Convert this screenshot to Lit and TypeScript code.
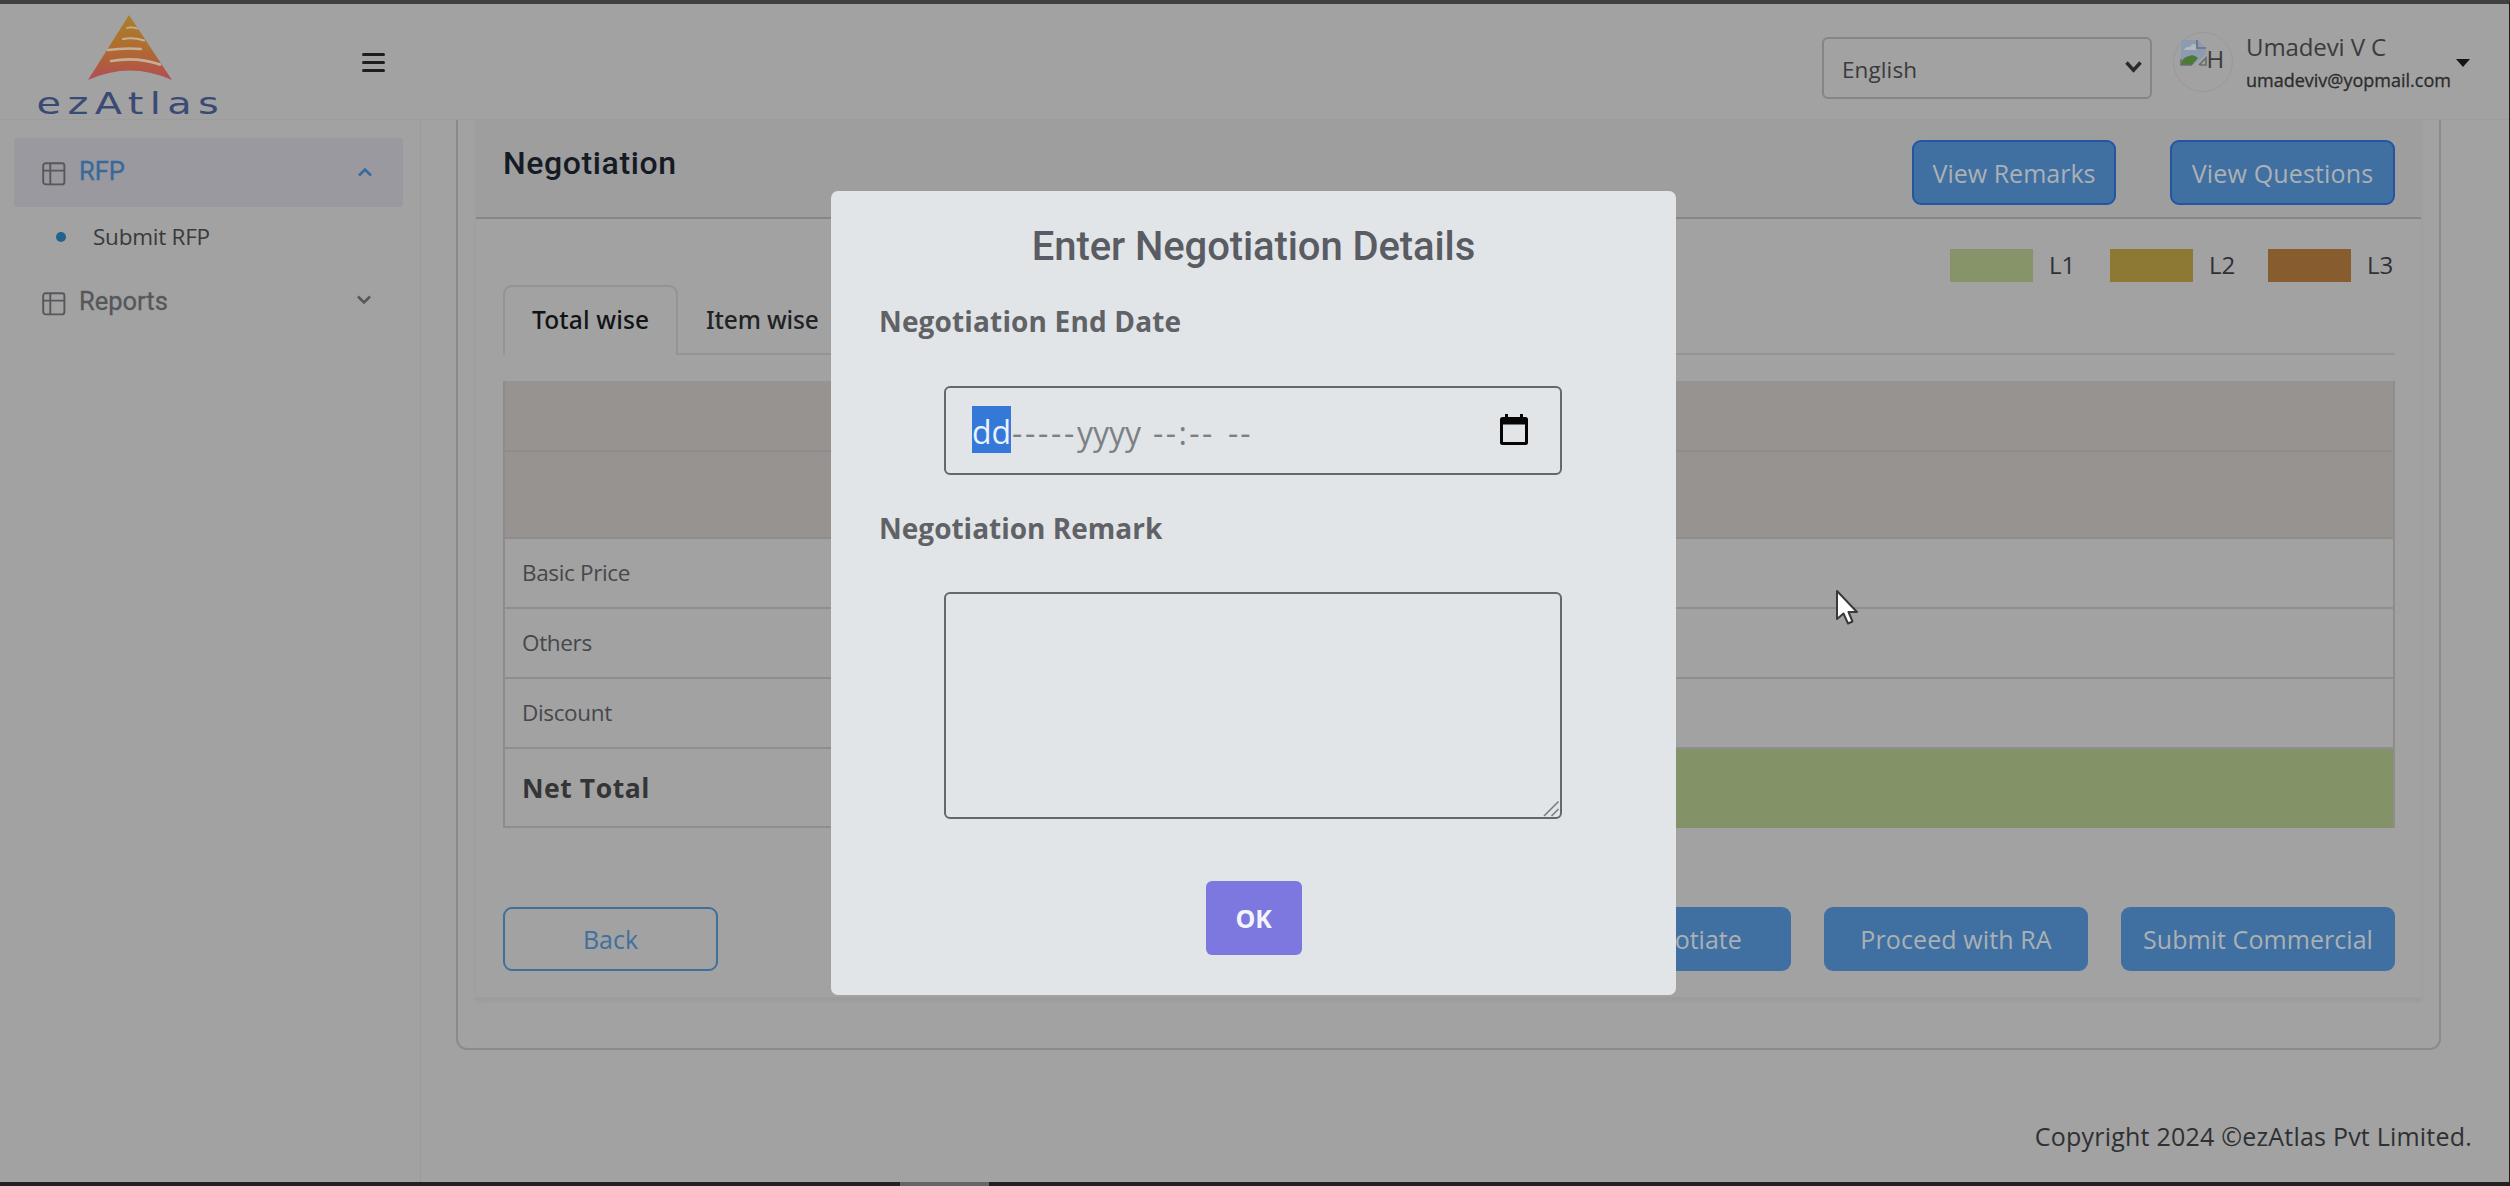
import { LitElement, html, svg, css } from "lit";
import { customElement, property } from "lit/decorators.js";

const gridIcon = svg`<svg class="grid-icon" viewBox="0 0 24 24" width="24" height="24">
  <rect x="1.2" y="1.2" width="21.2" height="21.2" rx="2.4" />
  <path d="M1.2 8.6H22.4M8.3 1.2V22.4" />
</svg>`;

@customElement("ez-logo")
class EzLogo extends LitElement {
  static styles = css`
    :host { display: block; width: 200px; height: 111px; }
    svg { overflow: visible; }
    .word { font-family: "DejaVu Sans", sans-serif; font-size: 31px; letter-spacing: 5px; fill: #3a4a74; }
    .band { fill: none; stroke: #c4b09a; stroke-linecap: round; }
  `;
  render() {
    return html`<svg viewBox="30 8 200 111" width="200" height="111">
      <defs>
        <linearGradient id="g" x1="0" y1="0" x2="0" y2="1">
          <stop offset="0" stop-color="#ab7d2c" />
          <stop offset="0.5" stop-color="#b06d2e" />
          <stop offset="0.75" stop-color="#b25c3e" />
          <stop offset="1" stop-color="#b04d5b" />
        </linearGradient>
      </defs>
      <path fill="url(#g)" d="M129 15L172 80Q130 61 88 80Z" />
      <path class="band" stroke-width="1.8" d="M127 28Q132 26.500 137 28.500" />
      <path class="band" stroke-width="2.2" d="M123 39Q133 37 144 40.500" />
      <path class="band" stroke-width="2.4" d="M108 50Q125 47.500 141 49" />
      <path class="band" stroke-width="2.6" d="M111 61Q136 56.500 160 64.500" />
      <text class="word" transform="translate(36.500 114.300) scale(1.285 1)">ezAtlas</text>
    </svg>`;
  }
}

@customElement("ez-button")
class EzButton extends LitElement {
  @property() label = "";
  static styles = css`
    :host {
      display: flex; align-items: center; justify-content: center; box-sizing: border-box;
      border-radius: 9px; background: #4070a1; color: #abb0b4;
      font: 400 25px/36px "Open Sans", "Noto Sans", sans-serif; white-space: nowrap;
    }
  `;
  render() {
    return html`${this.label}`;
  }
}

@customElement("ez-header")
class EzHeader extends LitElement {
  static styles = css`
    :host {
      display: flex; align-items: flex-start; height: 116px; box-sizing: border-box;
      background: #a2a2a2; border-bottom: 1px solid #9d9d9d; color: #3b3b3b;
      font-family: "Open Sans", "Noto Sans", sans-serif; white-space: nowrap;
    }
    ez-logo { margin: 4px 0 0 30px; }
    .burger { display: flex; flex-direction: column; gap: 4.500px; width: 23px; margin: 49px 0 0 131.500px; }
    .burger i { height: 3.400px; border-radius: 1.500px; background: #1d1d1d; }
    .lang {
      display: flex; align-items: center; justify-content: space-between; box-sizing: border-box;
      width: 330px; height: 62px; margin: 33px 0 0 auto; padding: 3px 8px 0 18px;
      border: 2px solid #858585; border-radius: 6px; font-size: 22.500px; letter-spacing: 0.100px;
    }
    .lang svg { margin-top: -5px; }
    .avatar {
      display: flex; box-sizing: border-box; width: 60px; height: 60px; margin: 28px 12px 0 21px;
      padding: 5px 0 0 5.500px; border: 1.500px solid #999; border-radius: 50%; font-size: 24px; line-height: 36px;
    }
    .avatar span { margin: 3px 0 0 -1px; }
    .avatar svg { margin-top: 1px; }
    .who { display: flex; flex-direction: column; gap: 3px; width: 210px; padding: 27px 0 0 1px; }
    .name { font-size: 24px; line-height: 32px; letter-spacing: -0.100px; }
    .mail { font-size: 18px; line-height: 28px; color: #2c2c2c; -webkit-text-stroke: 0.300px currentColor; }
    .caret { margin: 55px 39px 0 0; border: 7px solid transparent; border-top: 8px solid #161616; border-bottom: 0; }
  `;
  render() {
    return html`
      <ez-logo></ez-logo>
      <div class="burger"><i></i><i></i><i></i></div>
      <div class="lang"><span>English</span>
        <svg width="17" height="12" viewBox="0 0 17 12" fill="none" stroke="#2a2a2a" stroke-width="3.400"><path d="M1.500 1.500L8.500 9.200L15.500 1.500" /></svg>
      </div>
      <div class="avatar">
        <svg width="28" height="28" viewBox="0 0 28 28">
          <path d="M1 1H18L26 9V15L13 26H1Z" fill="#8d9bb0" />
          <path d="M4 11Q6 7 10 8Q12 3 16 6V11Z" fill="#b3b8bd" />
          <path d="M1 26Q2 18 9 17Q14 15 18 19L12 26Z" fill="#4a7a35" />
          <path d="M17 1V9H26" fill="none" stroke="#69717c" stroke-width="1.600" />
          <path d="M1 20V26H12M20 26H26V19L19 26" fill="none" stroke="#68706c" stroke-width="1.600" />
        </svg><span>H</span>
      </div>
      <div class="who"><span class="name">Umadevi V C</span><span class="mail">umadeviv@yopmail.com</span></div>
      <i class="caret"></i>
    `;
  }
}

@customElement("ez-sidebar")
class EzSidebar extends LitElement {
  static styles = css`
    :host {
      display: flex; flex-direction: column; box-sizing: border-box; width: 421px; padding: 18px 17px 0 14px;
      border-right: 1.500px solid #9a9a9a; white-space: nowrap;
    }
    .item {
      display: flex; align-items: center; box-sizing: border-box; height: 69px; padding: 0 31px 0 27.500px;
      color: #55575b; font: 400 25.500px/34px Roboto, "Open Sans", sans-serif;
    }
    .item span { margin: -3px auto 0 13.500px; -webkit-text-stroke: 0.300px currentColor; }
    .item.active { background: #99999f; color: #38699b; border-radius: 3px; }
    .item.closed { padding-top: 3px; }
    .item.closed .chev { margin: -4px 1px 0 0; }
    .grid-icon { fill: none; stroke: #56585b; stroke-width: 1.900; margin-top: 3px; }
    .chev { fill: none; stroke: currentColor; stroke-width: 2.500; margin-top: -2px; }
    .sub {
      display: flex; align-items: center; height: 59px; padding-left: 42px; gap: 27px; color: #383a3e;
      font: 400 22.500px/34px "Open Sans", "Noto Sans", sans-serif; letter-spacing: -0.250px;
    }
    .sub i { width: 10px; height: 10px; border-radius: 50%; background: #23628f; }
  `;
  render() {
    return html`
      <div class="item active">${gridIcon}<span>RFP</span>
        <svg class="chev" width="14" height="10" viewBox="0 0 14 10"><path d="M1 8.500L7 2.500L13 8.500" /></svg></div>
      <div class="sub"><i></i>Submit RFP</div>
      <div class="item closed">${gridIcon}<span>Reports</span>
        <svg class="chev" width="14" height="10" viewBox="0 0 14 10"><path d="M1 1.500L7 7.500L13 1.500" /></svg></div>
    `;
  }
}

const legend = [
  ["l1", "L1"],
  ["l2", "L2"],
  ["l3", "L3"],
];

@customElement("ez-negotiation")
class EzNegotiation extends LitElement {
  static styles = css`
    :host {
      display: block; box-sizing: border-box; width: 1985px; height: 930px; padding: 0 18px;
      border: 2px solid #8b8b8b; border-top: 0; border-radius: 0 0 11px 11px;
      font-family: "Open Sans", "Noto Sans", sans-serif; white-space: nowrap;
    }
    .panel { display: flex; flex-direction: column; height: 881px; box-sizing: border-box; border-bottom: 4px solid #9c9c9c; box-shadow: 0 0 4px #9b9b9b; clip-path: inset(0 -6px -6px -6px); }
    .head { display: flex; align-items: flex-start; box-sizing: border-box; height: 99px; padding: 0 26px 0 27px; background: #9e9e9e; border-bottom: 2px solid #868686; }
    h1 { margin: 23px auto 0 0; font: 500 32px/40px Roboto, sans-serif; letter-spacing: 0.600px; color: #151b24; }
    .head ez-button { height: 65px; margin-top: 20px; border: 2px solid #2456a0; }
    .remarks { width: 204px; margin-right: 54px; }
    .questions { width: 225px; letter-spacing: 0.150px; }
    .legend { display: grid; grid-template-columns: 160px 158px 127px; justify-content: end; height: 33px; margin: 30px 26px 0 0; }
    .key { display: flex; align-items: center; gap: 16px; font-size: 24px; line-height: 31px; padding-bottom: 2px; color: #2f3134; }
    .swatch { width: 83px; height: 33px; margin-bottom: -2px; }
    .l1 { background: #87946a; }
    .l2 { background: #8d7834; }
    .l3 { background: #875d30; }
    .tabs { display: flex; height: 70px; margin: 2.500px 26px 0 27px; box-sizing: border-box; font: 500 24.500px/36px "Noto Sans", "Open Sans", sans-serif; color: #202226; }
    .tab { box-sizing: border-box; width: 175px; padding: 15px 0 0 27px; letter-spacing: 0.150px; border: 2px solid #949494; border-bottom: 0; border-radius: 9px 9px 0 0; color: #121316; }
    .rest { flex: 1; box-sizing: border-box; padding: 17px 0 0 28px; letter-spacing: -0.150px; border-bottom: 2px solid #949494; }
    .table { display: grid; grid-template-rows: 71px 87px 70px 70px 70px 79px; margin: 26px 26px 0 27px; box-sizing: border-box; border: 2px solid #8e8c8c; border-top: 0; border-bottom: 0; font-size: 22.500px; color: #46484b; }
    .row { display: grid; grid-template-columns: 630px 1fr; box-sizing: border-box; border-bottom: 2px solid #8e8e8e; }
    .row span { padding: 0 17px; align-self: center; letter-spacing: -0.350px; }
    .shade { background: #979391; border-bottom-color: #908c8b; }
    .total { font-size: 26.500px; font-weight: 700; color: #343537; }
    .row.total span { letter-spacing: 0.550px; padding-top: 1px; }
    .total b { background: #849267; border-bottom: 2px solid #848f6c; margin-bottom: -2px; }
    .actions { display: flex; align-items: center; height: 64px; margin: 79.500px 26px 0 27px; gap: 33px; }
    .actions ez-button { height: 64px; }
    .back { width: 215px; margin-right: auto; background: none; border: 2px solid #416f9c; color: #41709e; }
    .negotiate { width: 212px; }
    .proceed { width: 264px; letter-spacing: 0.100px; }
    .submit { width: 274px; letter-spacing: 0.050px; }
  `;
  render() {
    return html`<div class="panel">
      <div class="head">
        <h1>Negotiation</h1>
        <ez-button class="remarks" label="View Remarks"></ez-button>
        <ez-button class="questions" label="View Questions"></ez-button>
      </div>
      <div class="legend">${legend.map(([c, t]) => html`<div class="key"><i class="swatch ${c}"></i>${t}</div>`)}</div>
      <div class="tabs"><div class="tab">Total wise</div><div class="rest">Item wise</div></div>
      <div class="table">
        <div class="row shade"></div>
        <div class="row shade"></div>
        ${["Basic Price", "Others", "Discount"].map((t) => html`<div class="row"><span>${t}</span></div>`)}
        <div class="row total"><span>Net Total</span><b></b></div>
      </div>
      <div class="actions">
        <ez-button class="back" label="Back"></ez-button>
        <ez-button class="negotiate" label="Negotiate"></ez-button>
        <ez-button class="proceed" label="Proceed with RA"></ez-button>
        <ez-button class="submit" label="Submit Commercial"></ez-button>
      </div>
    </div>`;
  }
}

@customElement("ez-dialog")
class EzDialog extends LitElement {
  static styles = css`
    :host {
      display: flex; flex-direction: column; box-sizing: border-box; width: 845px; height: 804px; padding: 35px 48px 0;
      border-radius: 7px; background: #e2e5e8; color: #5b5d61;
      font-family: "Open Sans", "Noto Sans", sans-serif; white-space: nowrap;
    }
    h2 { margin: 0; text-align: center; font: 500 40px/42px Roboto, sans-serif; letter-spacing: -0.100px; color: #595c62; }
    .label { font-size: 28px; line-height: 38px; font-weight: 700; letter-spacing: 0.150px; color: #606266; }
    .end { margin-top: 34px; }
    .field { box-sizing: border-box; width: 618px; margin-left: 65px; border: 2px solid #65686b; border-radius: 6px; }
    .date { display: flex; align-items: center; height: 89px; margin-top: 46px; padding: 0 32px 0 26px; font-size: 32px; line-height: 47px; color: #7d8083; }
    .day { width: 39px; height: 47px; margin-top: -2px; line-height: 51px; text-align: center; background: #3478d8; color: #e9f1fb; }
    .m { width: 66px; padding-left: 1px; box-sizing: border-box; letter-spacing: 2.700px; }
    .y { width: 76px; }
    .t { width: 75px; letter-spacing: 2.400px; }
    .p { letter-spacing: 2px; margin-right: auto; }
    .m, .y, .t, .p { margin-top: 3px; }
    .date svg { margin-top: -3px; }
    .remark { margin-top: 34px; letter-spacing: 0; }
    .area { display: flex; align-items: flex-end; justify-content: flex-end; height: 227px; margin-top: 45px; }
    .ok { align-self: center; display: flex; align-items: center; justify-content: center; width: 96px; height: 74px; margin-top: 62px; border-radius: 6px; background: #7c78e0; color: #f4f4fd; font-size: 25px; font-weight: 700; letter-spacing: -0.300px; }
  `;
  render() {
    return html`
      <h2>Enter Negotiation Details</h2>
      <div class="label end">Negotiation End Date</div>
      <div class="field date">
        <span class="day">dd</span><span class="m">-----</span><span class="y">yyyy</span><span class="t">--:--</span><span class="p">--</span>
        <svg width="28" height="31" viewBox="0 0 28 31">
          <path fill="#050505" fill-rule="evenodd" d="M5 0H8V3H20V0H23V3H25.500Q28 3 28 5.500V28.500Q28 31 25.500 31H2.500Q0 31 0 28.500V5.500Q0 3 2.500 3H5ZM3 10.500V28H25V10.500Z" />
        </svg>
      </div>
      <div class="label remark">Negotiation Remark</div>
      <div class="field area">
        <svg width="17" height="17" viewBox="0 0 17 17" fill="none" stroke="#7b7e81" stroke-width="1.600"><path d="M1 16L15.500 1.500M8.500 16L15.500 9" /></svg>
      </div>
      <div class="ok">OK</div>
    `;
  }
}

@customElement("app-root")
class AppRoot extends LitElement {
  static styles = css`
    :host { display: block; position: relative; width: 2510px; height: 1186px; overflow: hidden; background: #a2a2a2; }
    .page { display: flex; flex-direction: column; height: 1186px; box-sizing: border-box; border-top: 4px solid #404040; border-right: 1px solid #1c1c1c; }
    .body { display: flex; flex: 1; min-height: 0; }
    main { display: flex; flex: 1; flex-direction: column; padding-left: 35px; }
    footer { margin: 68px 37px 0 0; text-align: right; color: #2f3032; font: 400 25px/36px "Open Sans", "Noto Sans", sans-serif; letter-spacing: 0.210px; }
    .edge { display: flex; height: 4px; background: #222021; }
    .edge i { width: 89px; margin-left: 900px; background: #666; }
    .veil { position: absolute; inset: 0; display: flex; align-items: center; justify-content: center; padding: 0 3px 0 0; }
    .cursor { position: absolute; left: 1835px; top: 589px; }
  `;
  render() {
    return html`
      <div class="page">
        <ez-header></ez-header>
        <div class="body">
          <ez-sidebar></ez-sidebar>
          <main>
            <ez-negotiation></ez-negotiation>
            <footer>Copyright 2024 ©ezAtlas Pvt Limited.</footer>
          </main>
        </div>
        <div class="edge"><i></i></div>
      </div>
      <div class="veil"><ez-dialog></ez-dialog></div>
      <svg class="cursor" width="25" height="37" viewBox="0 0 25 37">
        <path d="M2 2V30L8.500 24.500L13 34.500L17.500 32.500L13.500 23H22Z" fill="#fff" stroke="#3a3a3a" stroke-width="2" stroke-linejoin="round" />
      </svg>
    `;
  }
}
